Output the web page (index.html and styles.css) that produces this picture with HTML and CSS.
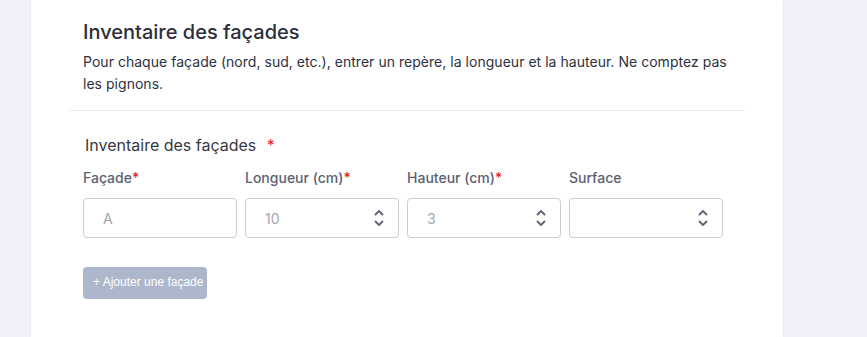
FILE: index.html
```html
<!DOCTYPE html>
<html lang="fr">
<head>
<meta charset="utf-8">
<title>Inventaire des façades</title>
<link rel="stylesheet" href="styles.css">
</head>
<body>
<div class="page">
  <main class="card">
    <div class="inner">
      <header class="head">
        <h1 class="title">Inventaire des façades</h1>
        <p class="desc">Pour chaque façade (nord, sud, etc.), entrer un repère, la longueur et la hauteur. Ne comptez pas les pignons.</p>
      </header>
      <hr class="divider">
      <section class="body">
        <div class="section-label">Inventaire des façades <span class="req">*</span></div>
        <div class="grid">
          <label class="lab">Façade<span class="req">*</span></label>
          <label class="lab">Longueur (cm)<span class="req">*</span></label>
          <label class="lab">Hauteur (cm)<span class="req">*</span></label>
          <label class="lab">Surface</label>
          <div class="field"><span class="ph">A</span></div>
          <div class="field"><span class="ph">10</span>
            <svg class="spin" width="12" height="22" viewBox="0 0 12 22"><path d="M2.5 7.5 L6 4 L9.5 7.5 M2.5 14.5 L6 18 L9.5 14.5" fill="none" stroke="#5b6274" stroke-width="1.8" stroke-linecap="round" stroke-linejoin="round"/></svg>
          </div>
          <div class="field"><span class="ph">3</span>
            <svg class="spin" width="12" height="22" viewBox="0 0 12 22"><path d="M2.5 7.5 L6 4 L9.5 7.5 M2.5 14.5 L6 18 L9.5 14.5" fill="none" stroke="#5b6274" stroke-width="1.8" stroke-linecap="round" stroke-linejoin="round"/></svg>
          </div>
          <div class="field"><span class="ph"></span>
            <svg class="spin" width="12" height="22" viewBox="0 0 12 22"><path d="M2.5 7.5 L6 4 L9.5 7.5 M2.5 14.5 L6 18 L9.5 14.5" fill="none" stroke="#5b6274" stroke-width="1.8" stroke-linecap="round" stroke-linejoin="round"/></svg>
          </div>
        </div>
        <button class="add" type="button">+ Ajouter une façade</button>
      </section>
    </div>
  </main>
</div>
</body>
</html>
```
FILE: styles.css
```css
html, body {
  margin: 0;
  padding: 0;
  height: 100%;
}
body {
  background: #f1f1fc;
  font-family: Inter, "Noto Sans", sans-serif;
  color: #2e3140;
}
.page {
  display: flex;
  padding-left: 31px;
  height: 100%;
}
.card {
  width: 752px;
  background: #ffffff;
  box-shadow: 0 0 2px rgba(180, 180, 210, 0.35);
  padding-top: 18px;
  box-sizing: border-box;
}
.inner {
  padding: 0 38px;
}
.head {
  padding: 0 14px;
}
.title {
  margin: 0 0 5px;
  font-size: 20px;
  line-height: 28px;
  font-weight: 500;
  color: #2b2f3c;
}
.desc {
  margin: 0;
  font-size: 14px;
  line-height: 22px;
  letter-spacing: 0.03px;
  color: #2e3140;
}
.divider {
  border: 0;
  border-top: 1px solid #ebebef;
  margin: 15px 0 0;
}
.body {
  padding: 23px 14px 0;
}
.section-label {
  font-size: 16px;
  line-height: 22px;
  color: #363a46;
  margin-bottom: 12px;
  padding-left: 2px;
}
.section-label .req {
  margin-left: 6px;
}
.req {
  color: #e5252b;
}
.grid {
  display: grid;
  grid-template-columns: repeat(4, 154px);
  column-gap: 8px;
  row-gap: 11px;
}
.lab {
  font-size: 14px;
  line-height: 19px;
  font-weight: 500;
  color: #5b6172;
}
.field {
  height: 40px;
  box-sizing: border-box;
  border: 1px solid #c9ccd3;
  border-radius: 4px;
  display: flex;
  align-items: center;
  justify-content: space-between;
  padding: 0 13px 0 19px;
}
.ph {
  font-size: 14px;
  color: #a3a7b0;
}
.spin {
  display: block;
}
.add {
  margin-top: 29px;
  width: 124px;
  height: 32px;
  padding: 0 0 2px 10px;
  text-align: left;
  border: 0;
  border-radius: 4px;
  background: #adb7cb;
  color: #ffffff;
  font-family: "Liberation Sans", Arial, sans-serif;
  font-size: 12px;
  font-weight: 500;
  white-space: nowrap;
}
```
